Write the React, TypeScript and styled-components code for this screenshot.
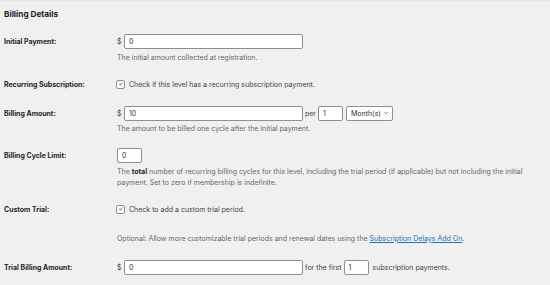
import React from "react";
import styled, { createGlobalStyle } from "styled-components";

const Global = createGlobalStyle`
  html, body { margin: 0; padding: 0; background: #f0f0f1; }
  body { font-family: Inter, "Open Sans", "Liberation Sans", sans-serif; color: #1d2327; }
  * { box-sizing: border-box; }
`;

const Page = styled.div`
  width: 550px;
  height: 285px;
  overflow: hidden;
  border-top: 1px solid #e6e7e9;
  padding: 0 0 0 4px;
`;

const Heading = styled.h3`
  margin: 0;
  padding-top: 7px;
  font-size: 8.2px;
  line-height: 13px;
  font-weight: 700;
  color: #1d2327;
  margin-bottom: 13px;
`;

const Rows = styled.div`
  display: flex;
  flex-direction: column;
  gap: 14px;
`;

const Row = styled.div`
  display: grid;
  grid-template-columns: 113px 1fr;
  align-items: start;
`;

const Label = styled.div`
  font-size: 6.95px;
  font-weight: 700;
  line-height: 15px;
  color: #1d2327;
`;

const Field = styled.div`
  display: flex;
  flex-direction: column;
  max-width: 422px;
`;

const Line = styled.div`
  display: flex;
  align-items: center;
  height: 15px;
  font-size: 7px;
  color: #3c434a;
`;

const Currency = styled.span`
  width: 7px;
  font-size: 7px;
  color: #3c434a;
`;

const TextInput = styled.div<{ $w: number }>`
  width: ${(p) => p.$w}px;
  flex: none;
  height: 15px;
  background: #fff;
  border: 1px solid #8c8f94;
  border-radius: 2px;
  display: flex;
  align-items: center;
  padding-left: 4px;
  font-size: 7px;
  color: #2c3338;
`;

const Between = styled.span<{ $l: number; $r: number }>`
  margin: 0 ${(p) => p.$r}px 0 ${(p) => p.$l}px;
  font-size: 7px;
  color: #3c434a;
  white-space: nowrap;
`;

const Select = styled.div`
  width: 47px;
  flex: none;
  height: 15px;
  margin-left: 3px;
  background: #fff;
  border: 1px solid #8c8f94;
  border-radius: 2px;
  display: flex;
  align-items: center;
  justify-content: space-between;
  padding: 0 3px 0 4px;
  font-size: 7px;
  color: #2c3338;
`;

const Check = styled.span`
  width: 9px;
  height: 9px;
  background: #fff;
  border: 1px solid #8c8f94;
  border-radius: 2px;
  display: inline-flex;
  align-items: center;
  justify-content: center;
  margin-right: 4px;
  margin-left: -1px;
`;

const Description = styled.p`
  margin: 2.5px 0 0;
  font-size: 7px;
  line-height: 11px;
  color: #646970;
`;

const Strong = styled.strong`
  color: #1d2327;
`;

const Plain = styled.span`
  font-size: 7px;
  color: #646970;
`;

const Link = styled.a`
  color: #2271b1;
  text-decoration: underline;
`;

const Tick = () => (
  <svg width="8" height="8" viewBox="0 0 20 20">
    <path d="M14.83 4.89l1.34.94-5.81 8.38H9.02L5.78 9.67l1.34-1.25 2.57 2.4z" fill="#3582c4" />
  </svg>
);

const Chevron = () => (
  <svg width="6" height="6" viewBox="0 0 10 10">
    <path d="M2 3.5l3 3 3-3" fill="none" stroke="#50575e" strokeWidth="1.2" />
  </svg>
);

export default function App() {
  return (
    <>
      <Global />
      <Page>
        <Heading>Billing Details</Heading>
        <Rows>
          <Row>
            <Label>Initial Payment:</Label>
            <Field>
              <Line>
                <Currency>$</Currency>
                <TextInput $w={179}>0</TextInput>
              </Line>
              <Description>The initial amount collected at registration.</Description>
            </Field>
          </Row>
          <Row>
            <Label>Recurring Subscription:</Label>
            <Field>
              <Line>
                <Check><Tick /></Check>
                Check if this level has a recurring subscription payment.
              </Line>
            </Field>
          </Row>
          <Row>
            <Label>Billing Amount:</Label>
            <Field>
              <Line>
                <Currency>$</Currency>
                <TextInput $w={179}>10</TextInput>
                <Between $l={2} $r={2}>per</Between>
                <TextInput $w={25}>1</TextInput>
                <Select>
                  Month(s)
                  <Chevron />
                </Select>
              </Line>
              <Description>The amount to be billed one cycle after the initial payment.</Description>
            </Field>
          </Row>
          <Row>
            <Label>Billing Cycle Limit:</Label>
            <Field>
              <Line>
                <TextInput $w={25}>0</TextInput>
              </Line>
              <Description>
                The <Strong>total</Strong> number of recurring billing cycles for this level, including the trial
                period (if applicable) but not including the initial payment. Set to zero if membership is indefinite.
              </Description>
            </Field>
          </Row>
          <Row>
            <Label>Custom Trial:</Label>
            <Field>
              <Line>
                <Check><Tick /></Check>
                Check to add a custom trial period.
              </Line>
            </Field>
          </Row>
          <Row>
            <Label />
            <Field>
              <Line>
                <Plain>
                  Optional: Allow more customizable trial periods and renewal dates using the{" "}
                  <Link href="#">Subscription Delays Add On</Link>.
                </Plain>
              </Line>
            </Field>
          </Row>
          <Row>
            <Label>Trial Billing Amount:</Label>
            <Field>
              <Line>
                <Currency>$</Currency>
                <TextInput $w={179}>0</TextInput>
                <Between $l={2} $r={2}>for the first</Between>
                <TextInput $w={25}>1</TextInput>
                <Between $l={4} $r={0}>subscription payments.</Between>
              </Line>
            </Field>
          </Row>
        </Rows>
      </Page>
    </>
  );
}
